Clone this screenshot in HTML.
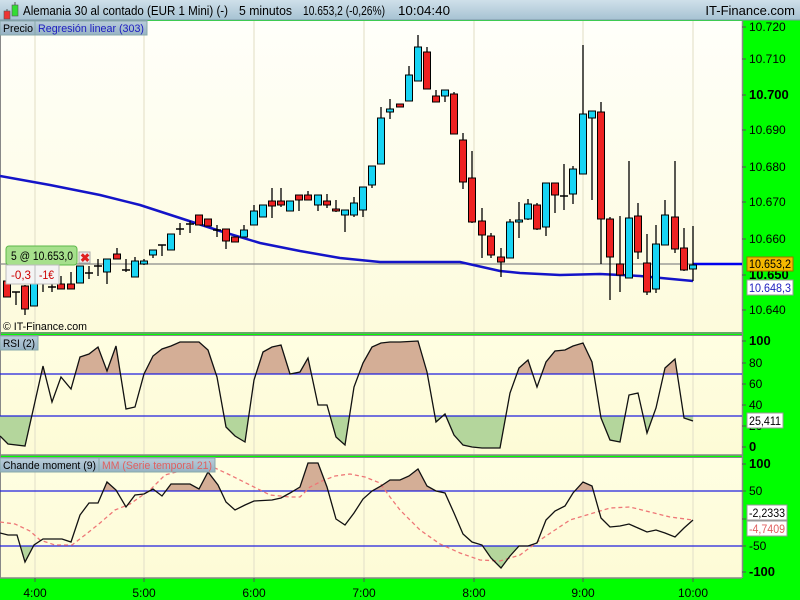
<!DOCTYPE html>
<html><head><meta charset="utf-8"><style>
html,body{margin:0;padding:0;width:800px;height:600px;overflow:hidden;background:#00ff00;font-family:"Liberation Sans",sans-serif}
svg text{font-family:"Liberation Sans",sans-serif}
</style></head><body>
<svg id="s" width="800" height="600" xmlns="http://www.w3.org/2000/svg">
<defs>
<linearGradient id="tb" x1="0" y1="0" x2="0" y2="1"><stop offset="0" stop-color="#cfe0ea"/><stop offset="1" stop-color="#a6c2d2"/></linearGradient>
<linearGradient id="bg1" x1="0" y1="0" x2="0" y2="1"><stop offset="0" stop-color="#fffffa"/><stop offset="1" stop-color="#fdfbdc"/></linearGradient>
<linearGradient id="bg2" x1="0" y1="0" x2="0" y2="1"><stop offset="0" stop-color="#fffee2"/><stop offset="1" stop-color="#fdfbd6"/></linearGradient>
<linearGradient id="hd" x1="0" y1="0" x2="0" y2="1"><stop offset="0" stop-color="#b9cdda"/><stop offset="1" stop-color="#96b2c4"/></linearGradient>
<clipPath id="rA"><rect x="0" y="335" width="742" height="39"/></clipPath>
<clipPath id="rB"><rect x="0" y="416" width="742" height="40"/></clipPath>
<clipPath id="cA"><rect x="0" y="457" width="742" height="34"/></clipPath>
<clipPath id="cB"><rect x="0" y="546" width="742" height="32"/></clipPath>
</defs>
<rect x="0" y="0" width="800" height="20" fill="url(#tb)"/>
<line x1="0" y1="20" x2="800" y2="20" stroke="#7c94a4"/>
<rect x="4" y="11" width="6" height="8" fill="#ee3333" stroke="#555" stroke-width="0.6"/>
<line x1="7" y1="9" x2="7" y2="11" stroke="#555"/>
<rect x="12" y="5" width="6" height="11" fill="#33dd33" stroke="#555" stroke-width="0.6"/>
<line x1="15" y1="2" x2="15" y2="5" stroke="#555"/>
<text x="23" y="15" font-size="13" textLength="205" lengthAdjust="spacingAndGlyphs">Alemania 30 al contado (EUR 1 Mini) (-)</text>
<text x="239" y="15" font-size="13" textLength="53" lengthAdjust="spacingAndGlyphs">5 minutos</text>
<text x="303" y="15" font-size="13" textLength="82" lengthAdjust="spacingAndGlyphs">10.653,2 (-0,26%)</text>
<text x="398" y="15" font-size="13" textLength="52" lengthAdjust="spacingAndGlyphs">10:04:40</text>
<text x="795" y="15" font-size="13" text-anchor="end">IT-Finance.com</text>
<rect x="0" y="21" width="742" height="311" fill="url(#bg1)"/>
<rect x="0" y="335" width="742" height="120" fill="url(#bg2)"/>
<rect x="0" y="457" width="742" height="121" fill="url(#bg2)"/>
<line x1="0" y1="333" x2="742" y2="333" stroke="#888" stroke-width="1.5"/>
<line x1="0" y1="335.5" x2="742" y2="335.5" stroke="#888"/>
<line x1="0" y1="455" x2="742" y2="455" stroke="#888" stroke-width="1.5"/>
<line x1="0" y1="457.5" x2="742" y2="457.5" stroke="#888"/>
<line x1="0" y1="578" x2="742" y2="578" stroke="#888" stroke-width="1.5"/>
<line x1="742.5" y1="21" x2="742.5" y2="578" stroke="#888" stroke-width="1.5"/>
<line x1="0.5" y1="21" x2="0.5" y2="578" stroke="#888"/>
<g id="grid" stroke="#e6e3cc" stroke-width="1.2"></g>
<g id="main"></g>
<g id="ind"></g>
<g id="axis" font-size="12"></g>
</svg>
<script>
function add(g,h){document.getElementById(g).insertAdjacentHTML('beforeend',h);}
function T(x,y,t,w,fs,fill,extra){return '<text x="'+x+'" y="'+y+'" font-size="'+(fs||12)+'"'+(fill?' fill="'+fill+'"':'')+(w?' textLength="'+w+'" lengthAdjust="spacingAndGlyphs"':'')+(extra||'')+'>'+t+'</text>';}
var hrs=[35,144,254,364,474,583,693],labs=['4:00','5:00','6:00','7:00','8:00','9:00','10:00'];
hrs.forEach(function(x,i){add('grid','<line x1="'+x+'" y1="21" x2="'+x+'" y2="332"/><line x1="'+x+'" y1="336" x2="'+x+'" y2="454"/><line x1="'+x+'" y1="458" x2="'+x+'" y2="577"/>');
add('axis','<text x="'+x+'" y="597" text-anchor="middle">'+labs[i]+'</text><line x1="'+x+'" y1="578" x2="'+x+'" y2="582" stroke="#555"/>');});
var C=[[7,281,297,281,297,'r'],[16,292,305,292,292,'c'],[25,285,315,286,309,'r'],[34,283,306,283,306,'b'],[43,279,292,283,283,'c'],[52,280,292,287,287,'c'],[61,276,289,284,289,'r'],[71,272,289,284,289,'r'],[80,266,283,266,283,'b'],[89,266,279,273,273,'c'],[98,259,276,266,266,'c'],[107,259,284,259,272,'b'],[117,248,259,254,259,'r'],[126,259,272,270,270,'c'],[135,257,277,261,277,'b'],[144,259,265,261,264,'b'],[153,250,258,250,255,'b'],[162,245,256,245,245,'c'],[171,234,250,234,250,'b'],[180,223,235,229,229,'c'],[190,221,233,224,224,'c'],[199,215,225,215,225,'r'],[208,219,226,219,226,'r'],[217,225,237,230,230,'c'],[226,229,249,229,241,'r'],[235,237,242,237,242,'r'],[244,225,237,230,237,'b'],[254,205,225,211,225,'b'],[263,205,217,205,217,'b'],[272,188,218,201,206,'r'],[281,188,207,201,205,'r'],[290,201,211,201,211,'b'],[299,195,211,195,200,'r'],[308,191,200,195,200,'r'],[318,195,211,195,205,'b'],[327,194,208,201,205,'r'],[336,200,212,209,211,'r'],[345,210,232,210,215,'b'],[354,197,217,203,215,'b'],[363,187,217,187,210,'b'],[372,166,188,166,185,'b'],[381,107,164,118,164,'b'],[390,99,119,109,112,'b'],[400,104,107,104,107,'r'],[409,66,101,75,101,'b'],[418,35,81,47,81,'b'],[427,47,89,52,89,'r'],[436,90,102,96,102,'r'],[445,90,102,90,96,'b'],[454,92,134,94,134,'r'],[463,133,189,140,182,'r'],[472,151,223,178,222,'r'],[482,208,258,221,235,'r'],[491,233,258,236,255,'r'],[501,248,277,257,262,'r'],[510,219,258,222,258,'b'],[519,202,238,220,222,'b'],[528,199,220,204,219,'b'],[537,203,230,205,229,'r'],[546,183,236,183,227,'b'],[555,183,213,183,195,'r'],[564,164,210,196,196,'c'],[573,166,204,169,194,'b'],[583,45,174,114,174,'b'],[592,111,200,111,118,'b'],[601,102,264,112,219,'r'],[610,217,300,219,257,'r'],[620,216,292,264,275,'r'],[629,161,278,218,278,'b'],[638,203,259,216,252,'r'],[647,234,295,263,292,'r'],[656,225,293,244,289,'b'],[665,200,245,215,245,'b'],[675,161,253,217,249,'r'],[684,228,271,248,270,'r'],[693,226,281,265,269,'b']];
var h='<line x1="0" y1="264" x2="742" y2="264" stroke="#8a8a8a" stroke-width="1.3"/>';
h+='<polyline fill="none" stroke="#1414c8" stroke-width="2.5" points="0,176 50,185 100,195 140,205 180,218 220,231 260,243 300,251 340,258 380,262 420,262 460,262 500,271 520,273 560,275 600,274 640,276 693,281"/>';
h+='<line x1="693" y1="264" x2="742" y2="264" stroke="#0000ee" stroke-width="2.5"/>';
C.forEach(function(c){var x=c[0];h+='<line x1="'+x+'" y1="'+c[1]+'" x2="'+x+'" y2="'+c[2]+'" stroke="#000" stroke-width="1.3"/>';
if(c[5]=='c')h+='<line x1="'+(x-4)+'" y1="'+c[3]+'" x2="'+(x+4)+'" y2="'+c[3]+'" stroke="#000" stroke-width="1.5"/>';
else h+='<rect x="'+(x-3.5)+'" y="'+c[3]+'" width="7" height="'+Math.max(c[4]-c[3],2)+'" fill="'+(c[5]=='r'?'#ee2222':'#18d4f4')+'" stroke="#000" stroke-width="1"/>';});
h+='<rect x="6" y="246" width="71" height="19" rx="3" fill="#a6e08c" stroke="#5cb84a"/>'+T(11,260,'5 @ 10.653,0',62,12);
h+='<rect x="6" y="265" width="29" height="19" fill="#f4f4f4" stroke="#bbb"/>'+T(11,279,'-0,3',20,12,'#c00');
h+='<rect x="35" y="265" width="24" height="19" fill="#f4f4f4" stroke="#bbb"/>'+T(39,279,'-1€',15,12,'#c00');
h+='<rect x="79" y="252" width="11" height="11" fill="#eee" stroke="#aaa"/><text x="80" y="262" font-size="12" font-weight="bold" fill="#e02020">✖</text>';
h+=T(3,330,'© IT-Finance.com',84,11);
h+='<rect x="0" y="21" width="35" height="14" fill="url(#hd)" stroke="#8aa"/>'+T(3,32,'Precio',30,11);
h+='<rect x="35" y="21" width="112" height="14" fill="url(#hd)" stroke="#8aa"/>'+T(38,32,'Regresión linear (303)',106,11,'#1c1cc0');
add('main',h);
var R='0,436 8,444 25,446 43,366 52,402 61,377 71,389 80,357 89,354 98,347 107,371 116,346 126,409 135,407 144,374 153,356 162,349 171,346 180,342 199,342 208,350 217,377 226,427 235,436 245,442 254,380 263,352 272,347 281,345 290,374 300,372 308,358 318,405 327,405 336,437 345,445 354,387 363,363 372,347 381,343 390,342 400,342 418,341 427,372 436,422 445,414 454,435 463,445 472,447 482,448 500,448 510,393 519,368 528,360 537,387 546,362 555,351 565,350 573,346 583,343 592,362 601,418 610,440 620,442 629,395 638,393 647,433 656,408 665,368 675,359 684,418 693,421';
var CH='0,533 8,535 17,535 25,562 34,545 43,539 62,539 71,542 80,515 89,503 98,503 107,482 116,490 126,507 135,495 144,494 153,489 162,496 171,484 190,484 199,489 208,472 218,485 226,502 235,510 245,505 254,501 272,500 281,498 290,493 300,487 308,463 318,463 327,487 336,519 345,525 354,513 363,499 372,491 381,486 390,480 400,480 409,476 418,469 427,486 436,491 445,493 454,513 463,534 472,542 482,545 491,558 501,568 510,556 519,546 528,546 537,543 546,520 555,511 565,506 573,493 583,482 592,486 601,518 610,527 620,526 629,524 638,528 647,532 656,530 665,533 675,537 684,528 693,520';
var MM='0,522 15,524 30,531 40,540 55,545 72,545 85,535 100,523 115,510 130,504 150,490 165,475 180,471 200,471 215,468 230,475 250,485 270,495 290,497 300,497 310,487 322,481 335,476 350,474 365,477 380,483 390,497 400,510 420,530 440,544 460,553 480,560 500,561 520,555 540,540 555,530 570,520 590,514 610,508 630,507 650,512 670,517 693,520';
var g='';
g+='<polygon clip-path="url(#rA)" fill="#d4ae96" points="0,374 '+R+' 693,374"/>';
g+='<polygon clip-path="url(#rB)" fill="#b4d69c" points="0,416 '+R+' 693,416"/>';
g+='<polygon clip-path="url(#cA)" fill="#d4ae96" points="0,491 '+CH+' 693,491"/>';
g+='<polygon clip-path="url(#cB)" fill="#b4d69c" points="0,546 '+CH+' 693,546"/>';
[374,416,491,546].forEach(function(y){g+='<line x1="0" y1="'+y+'" x2="742" y2="'+y+'" stroke="#2020dd" stroke-width="1.2"/>';});
g+='<polyline fill="none" stroke="#111" stroke-width="1.3" points="'+R+'"/>';
g+='<polyline fill="none" stroke="#ee7777" stroke-width="1.3" stroke-dasharray="4,3" points="'+MM+'"/>';
g+='<polyline fill="none" stroke="#111" stroke-width="1.3" points="'+CH+'"/>';
g+='<rect x="0" y="336" width="38" height="14" fill="url(#hd)" stroke="#8aa"/>'+T(3,347,'RSI (2)',32,11);
g+='<rect x="0" y="458" width="99" height="14" fill="url(#hd)" stroke="#8aa"/>'+T(3,469,'Chande moment (9)',93,11);
g+='<rect x="99" y="458" width="116" height="14" fill="url(#hd)" stroke="#8aa"/>'+T(102,469,'MM (Serie temporal 21)',110,11,'#e06060');
add('ind',g);
var a='';
function lab(y,t,b,fs){a+='<line x1="742" y1="'+y+'" x2="746" y2="'+y+'" stroke="#555"/><text x="749" y="'+(y+4)+'" font-size="'+(fs||12)+'"'+(b?' font-weight="bold"':'')+'>'+t+'</text>';}
lab(27,'10.720');lab(59,'10.710');lab(95,'10.700',1,13);lab(130,'10.690');lab(167,'10.680');lab(202,'10.670');lab(239,'10.660');lab(275,'10.650',1,13);lab(310,'10.640');
lab(341,'100',1,13);lab(363,'80');lab(384,'60');lab(405,'40');lab(426,'20');lab(447,'0',1,13);
lab(464,'100',1,13);lab(491,'50');lab(519,'0');lab(546,'-50');lab(572,'-100',1,13);
a+='<rect x="747" y="257" width="46" height="14" fill="#f4b800" stroke="#a07000"/>'+T(749,268,'10.653,2',42,12);
a+='<rect x="747" y="280" width="46" height="15" fill="#fff" stroke="#999"/>'+T(749,292,'10.648,3',42,12,'#2020c0');
a+='<rect x="747" y="413" width="36" height="15" fill="#fff" stroke="#999"/>'+T(749,425,'25,411',32,12);
a+='<rect x="747" y="505" width="40" height="15" fill="#fff" stroke="#999"/>'+T(749,517,'-2,2333',36,12);
a+='<rect x="747" y="521" width="40" height="15" fill="#fff" stroke="#999"/>'+T(749,533,'-4,7409',36,12,'#e06060');
add('axis',a);
</script>
</body></html>
